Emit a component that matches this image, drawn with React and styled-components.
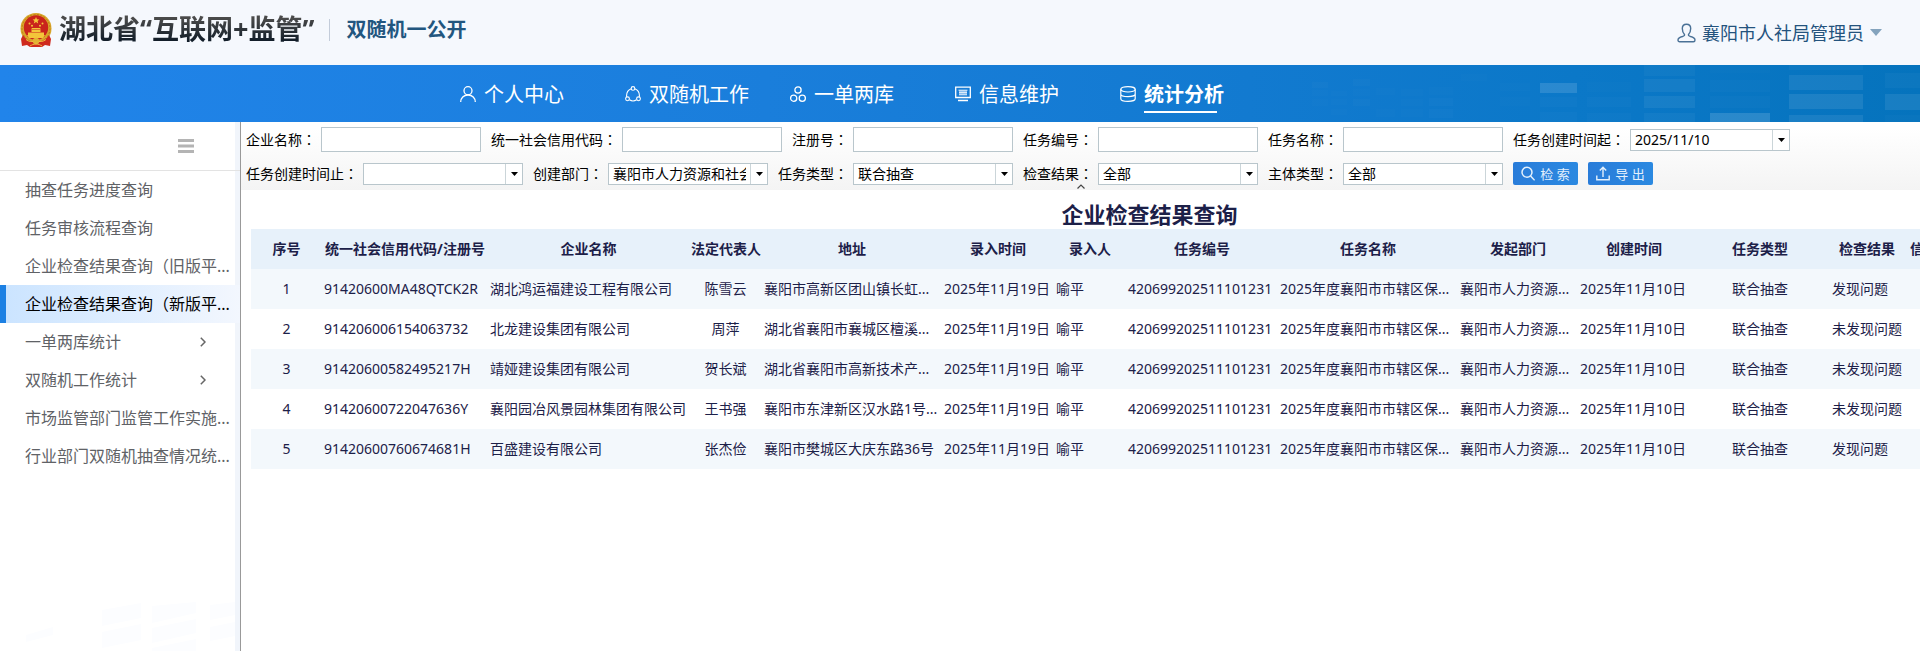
import React from "react";
import styled, { createGlobalStyle, css } from "styled-components";

const sans = `"Noto Sans", "Noto Sans CJK SC", sans-serif`;

const GlobalStyle = createGlobalStyle`
  * { box-sizing: border-box; }
  body { margin: 0; background: #fff; font: 14px/20px ${sans}; color: #000; overflow: hidden; }
  button, input, select { font: inherit; color: inherit; }
`;

const Page = styled.div`
  min-height: 100vh;
  display: flex;
  flex-direction: column;
`;

const Header = styled.header`
  height: 65px;
  padding: 0 38px 0 19px;
  display: flex;
  align-items: center;
  background: #f5f8fd;
`;

const Brand = styled.div`
  flex: 1;
  align-self: flex-start;
  display: flex;
  align-items: center;
  height: 60px;
`;

const BrandTitle = styled.h1`
  margin: 0 15px 2px 6px;
  font-size: 27px;
  line-height: 36px;
  font-weight: 700;
  background: linear-gradient(#4a4a4a 20%, #101c28 85%);
  background-clip: text;
  -webkit-background-clip: text;
  color: transparent;
`;

const BrandSub = styled.span`
  padding-left: 16px;
  border-left: 1px solid #c3ccda;
  font-size: 20px;
  line-height: 22px;
  font-weight: 700;
  color: #22567f;
`;

const UserMenu = styled.button`
  display: flex;
  align-items: center;
  gap: 6px;
  padding: 0;
  border: 0;
  background: none;
  color: #24537d;
  font-size: 18px;
  line-height: 24px;
`;

const Nav = styled.nav`
  height: 57px;
  display: grid;
  background: linear-gradient(90deg, #2184ea 0%, #1a7edb 40%, #127ad0 65%, #0b78c8 82%, #0573bd 100%);
`;

const NavList = styled.div`
  grid-area: 1 / 1;
  display: flex;
  padding-left: calc(50% - 500px);
`;

const NavDecor = styled.svg`
  grid-area: 1 / 1;
  justify-self: end;
`;

const NavLink = styled.a`
  width: 165px;
  display: flex;
  align-items: center;
  gap: 8px;
  padding-top: 1px;
  color: #fff;
  font-size: 20px;
  line-height: 28px;
  text-decoration: none;
  font-weight: ${(p) => (p.$active ? 700 : 400)};
  svg { flex: none; }
`;

const NavText = styled.span`
  padding: 6px 0 4px;
  ${(p) =>
    p.$active &&
    css`
      background: linear-gradient(#fff, #fff) left bottom / 73px 2px no-repeat;
    `}
`;

const Body = styled.div`
  flex: 1;
  display: flex;
`;

const Sidebar = styled.aside`
  flex: none;
  width: 241px;
  border-right: 1px solid #999;
  background: linear-gradient(90deg, #fff 235px, #f1f5fb 235px);
  display: flex;
  flex-direction: column;
`;

const SideHead = styled.div`
  height: 49px;
  padding: 0 46px 0 0;
  display: flex;
  align-items: center;
  justify-content: flex-end;
  border-bottom: 1px solid #e3e3e3;
`;

const IconButton = styled.button`
  display: flex;
  padding: 0;
  border: 0;
  background: none;
`;

const SideItem = styled.a`
  height: 38px;
  padding: 0 34px 0 19px;
  display: flex;
  align-items: center;
  justify-content: space-between;
  white-space: nowrap;
  font-size: 16px;
  line-height: 24px;
  text-decoration: none;
  color: ${(p) => (p.$active ? "#000" : "#606266")};
  border-left: 6px solid ${(p) => (p.$active ? "#1c80e3" : "transparent")};
  ${(p) =>
    p.$active &&
    css`
      background: linear-gradient(90deg, #cbe4ff, #f3f7fe);
    `}
`;

const SideDecor = styled.svg`
  margin-top: auto;
  flex: none;
`;

const Main = styled.main`
  flex: 1;
  min-width: 0;
  overflow: hidden;
`;

const Filters = styled.form`
  padding: 5px;
  height: 68px;
  display: flex;
  flex-direction: column;
  gap: 10px;
  background: linear-gradient(#fff 10%, #f4f4f4);
`;

const FilterRow = styled.div`
  display: flex;
  align-items: center;
  gap: 10px;
  white-space: nowrap;
`;

const Field = styled.label`
  display: flex;
  align-items: center;
  gap: 5px;
`;

const Colon = styled.span`
  font-family: "Noto Sans CJK TC", sans-serif;
`;

const TextInput = styled.input`
  width: 160px;
  height: 25px;
  padding: 0 4px;
  border: 1px solid #b9c6cc;
  border-radius: 0;
  background: #fff;
  outline: none;
`;

const Combo = styled.span`
  width: 160px;
  height: 22px;
  display: grid;
  border: 1px solid #b9c6cc;
  background: #fff;
`;

const comboControl = css`
  grid-area: 1 / 1;
  width: 100%;
  height: 20px;
  min-width: 0;
  padding: 0 21px 0 4px;
  border: 0;
  border-radius: 0;
  background: none;
  appearance: none;
  outline: none;
  line-height: 20px;
`;

const ComboInput = styled.input`
  ${comboControl}
`;

const ComboSelect = styled.select`
  ${comboControl}
`;

const ComboArrow = styled.span`
  grid-area: 1 / 1;
  justify-self: end;
  width: 17px;
  display: flex;
  align-items: center;
  justify-content: center;
  border-left: 1px solid #cbd5d9;
  pointer-events: none;
`;

const ActionButton = styled.button`
  width: 65px;
  height: 23px;
  padding: 0;
  display: flex;
  align-items: center;
  justify-content: center;
  gap: 5px;
  border: 0;
  border-radius: 2px;
  background: linear-gradient(90deg, #297cd9, #2b89e1);
  color: #e3f0fc;
  font-size: 13px;
  line-height: 20px;
`;

const CollapseButton = styled(IconButton)`
  position: absolute;
  left: 50%;
  bottom: 1px;
  margin-left: -4px;
`;

const FilterPanel = styled.section`
  position: relative;
`;

const Table = styled.table`
  width: 1797px;
  margin-left: 10px;
  table-layout: fixed;
  border-collapse: collapse;
  color: #1c2048;
  white-space: nowrap;
`;

const Caption = styled.caption`
  padding: 9px 0 0;
  font-size: 22px;
  line-height: 30px;
  font-weight: 700;
  color: #1c2048;
`;

const HeadCell = styled.th`
  height: 40px;
  padding: ${(p) => (p.$edge ? "0 6px" : "0 2px")};
  background: #e7f1fa;
  font-weight: 700;
  text-align: ${(p) => (p.$edge ? "left" : "center")};
`;

const Row = styled.tr`
  background: ${(p) => (p.$striped ? "#f3f8fc" : "#fff")};
`;

const Cell = styled.td`
  height: 40px;
  padding: 0 2px;
  text-align: ${(p) => (p.$center ? "center" : "left")};
`;

/* ---------- drawings ---------- */

const Emblem = () => (
  <svg width="34" height="36" viewBox="0 0 34 36" aria-hidden="true">
    <circle cx="17" cy="16.500" r="15.500" fill="#d9a62a" />
    <circle cx="17" cy="16.500" r="14" fill="none" stroke="#b97f18" strokeWidth="1" strokeDasharray="2 1.500" />
    <path d="M4 23c3 5 8 7 13 7s10-2 13-7l2 4-1 7-5-1-3 2H11l-3-2-5 1-1-7z" fill="#cf2a1e" />
    <circle cx="17" cy="15.500" r="12.200" fill="#c9241c" />
    <path d="M17 5l1 2.200 2.400.2-1.800 1.600.6 2.400-2.200-1.300-2.200 1.300.6-2.400-1.800-1.600 2.400-.2z" fill="#f3c53a" />
    <g fill="#f3c53a">
      <circle cx="10.500" cy="11.500" r="1" />
      <circle cx="13" cy="13.800" r="1" />
      <circle cx="21" cy="13.800" r="1" />
      <circle cx="23.500" cy="11.500" r="1" />
      <path d="M12 17.500l1-1.500h8l1 1.500zM12.500 18h9v2h-9zM9 20.500h16V23H9zM8 23h18l-2 3H10z" />
    </g>
    <circle cx="17" cy="29" r="3.200" fill="#e3b234" />
    <path d="M7 27.500c3 2.500 6 2 7 2M27 27.500c-3 2.500-6 2-7 2M11 34c2-1 3-2 6-2s4 1 6 2" stroke="#f0c040" fill="none" />
  </svg>
);

const BustIcon = () => (
  <svg width="19" height="20" viewBox="0 0 19 20" fill="none" stroke="#4a7196" strokeWidth="1.400" aria-hidden="true">
    <path d="M7.500 11.500C5.800 9.800 5.300 7.500 5.300 5.600 5.300 2.900 7 1.200 9.500 1.200s4.200 1.700 4.200 4.400c0 1.900-.5 4.200-2.200 5.900-.3 1.200.6 1.600 2 2 3 .7 4.500 1.500 4.500 3.500 0 1.200-.6 1.800-1.700 1.800H2.700C1.600 18.800 1 18.200 1 17c0-2 1.500-2.800 4.500-3.500 1.400-.4 2.300-.8 2-2z" />
  </svg>
);

const icon = { width: 16, height: 16, viewBox: "0 0 16 16", fill: "none", stroke: "#fff", strokeWidth: 1.3, "aria-hidden": true };

const PersonIcon = () => (
  <svg {...icon}>
    <circle cx="8" cy="4.700" r="4" />
    <path d="M.7 16c0-4.200 3-7 7.300-7s7.300 2.800 7.300 7" />
  </svg>
);

const LinkedIcon = () => (
  <svg {...icon} strokeWidth="1.100">
    <circle cx="8" cy="2.400" r="1.800" />
    <circle cx="2.500" cy="12.800" r="1.900" />
    <circle cx="13.500" cy="12.800" r="1.900" />
    <path d="M6.200 2.800C3 4 1.300 7 1.600 10.900M9.800 2.800c3.200 1.200 4.900 4.200 4.600 8.100M4.400 13.800c2.200 1.500 5 1.500 7.200 0" />
  </svg>
);

const TrioIcon = () => (
  <svg {...icon}>
    <circle cx="8" cy="4" r="3.100" />
    <circle cx="3.700" cy="12.200" r="3.100" />
    <circle cx="12.300" cy="12.200" r="3.100" />
  </svg>
);

const ScreenIcon = () => (
  <svg {...icon}>
    <path d="M.7 1.200h14.600v10.300H.7zM3 14.500h10" />
    <path d="M4 4h8v5H4z" fill="#8fc0ee" stroke="none" />
    <path d="M3.500 4.200h9M4 6.500h8M4 8.800h8" stroke="#dcebfa" strokeWidth="1" />
  </svg>
);

const StackIcon = () => (
  <svg {...icon} strokeWidth="1.200">
    <ellipse cx="8" cy="3.300" rx="7.200" ry="2.700" />
    <path d="M.8 3.300v9.400c0 1.500 3.200 2.700 7.200 2.700s7.200-1.200 7.200-2.700V3.300M.8 7.900c0 1.500 3.200 2.700 7.200 2.700s7.200-1.200 7.200-2.700" />
  </svg>
);

const Triangle = ({ w, h, fill }) => (
  <svg width={w} height={h} viewBox={`0 0 ${w} ${h}`} aria-hidden="true">
    <path d={`M0 0h${w}L${w / 2} ${h}z`} fill={fill} />
  </svg>
);

const MenuIcon = () => (
  <svg width="16" height="14" viewBox="0 0 16 14" aria-hidden="true">
    <path d="M0 0h16v3H0zM0 5.500h16v3H0zM0 11h16v3H0z" fill="#b4b4b4" />
  </svg>
);

const Chevron = () => (
  <svg width="6" height="10" viewBox="0 0 6 10" fill="none" stroke="#666" strokeWidth="1.500" aria-hidden="true">
    <path d="M.8.8L5 5 .8 9.200" />
  </svg>
);

const SearchIcon = () => (
  <svg width="14" height="15" viewBox="0 0 14 15" fill="none" stroke="#e3f0fc" strokeWidth="1.500" aria-hidden="true">
    <circle cx="6" cy="6.200" r="5" />
    <path d="M9.600 10l4 4.300" />
  </svg>
);

const ExportIcon = () => (
  <svg width="14" height="15" viewBox="0 0 14 15" fill="none" stroke="#e3f0fc" strokeWidth="1.400" aria-hidden="true">
    <path d="M7 11V1.500M3.800 4.600L7 1.200l3.200 3.400M.8 9.500v4.200h12.400V9.500" />
  </svg>
);

/* faint window tiles: x, y, width, height, opacity */
const tiles = [
  [230, 18, 37, 10, 0.13], [230, 32, 37, 10, 0.02], [230, 47, 37, 10, 0.02],
  [277, 17, 44, 10, 0.01], [277, 32, 44, 10, 0.02], [277, 48, 44, 9, 0.02],
  [334, 0, 51, 11, 0.03], [334, 14, 51, 13, 0.05], [334, 31, 51, 12, 0.06], [334, 48, 51, 9, 0.04],
  [400, 0, 60, 8, 0.01], [400, 15, 60, 12, 0.02], [400, 31, 60, 12, 0.02], [400, 48, 60, 9, 0.14],
  [479, 0, 74, 5, 0.03], [479, 10, 74, 15, 0.07], [479, 29, 74, 15, 0.09], [479, 50, 74, 7, 0.08],
  [575, 8, 35, 15, 0.03], [575, 29, 35, 16, 0.08], [575, 50, 35, 7, 0.02],
  [2, 17, 16, 6, 0.02], [2, 25, 16, 6, 0.01], [2, 34, 16, 7, 0.01],
  [21, 26, 16, 5, 0.01], [21, 34, 16, 6, 0.01], [21, 44, 16, 6, 0.01],
  [43, 14, 17, 7, 0.02], [43, 24, 17, 7, 0.01], [43, 34, 17, 7, 0.02],
  [66, 23, 19, 7, 0.01], [66, 44, 19, 8, 0.01],
  [91, 24, 22, 7, 0.01], [91, 34, 22, 7, 0.01], [91, 44, 22, 8, 0.01],
  [119, 22, 24, 8, 0.01], [119, 33, 24, 8, 0.02], [119, 44, 24, 9, 0.02],
  [151, 9, 26, 7, 0.01], [190, 18, 30, 8, 0.01], [190, 32, 30, 9, 0.01],
];

/* ---------- data ---------- */

const navItems = [
  ["个人中心", PersonIcon],
  ["双随机工作", LinkedIcon],
  ["一单两库", TrioIcon],
  ["信息维护", ScreenIcon],
  ["统计分析", StackIcon, true],
];

const sideItems = [
  { text: "抽查任务进度查询" },
  { text: "任务审核流程查询" },
  { text: "企业检查结果查询（旧版平..." },
  { text: "企业检查结果查询（新版平...", active: true },
  { text: "一单两库统计", more: true },
  { text: "双随机工作统计", more: true },
  { text: "市场监管部门监管工作实施..." },
  { text: "行业部门双随机抽查情况统..." },
];

const columns = [
  ["序号", 71], ["统一社会信用代码/注册号", 166], ["企业名称", 201], ["法定代表人", 73],
  ["地址", 180], ["录入时间", 112], ["录入人", 72], ["任务编号", 152], ["任务名称", 180],
  ["发起部门", 120], ["创建时间", 112], ["任务类型", 140], ["检查结果", 74], ["信", 144],
];
const centered = [0, 3, 11];

const companies = [
  ["91420600MA48QTCK2R", "湖北鸿运福建设工程有限公司", "陈雪云", "襄阳市高新区团山镇长虹...", "发现问题"],
  ["914206006154063732", "北龙建设集团有限公司", "周萍", "湖北省襄阳市襄城区檀溪...", "未发现问题"],
  ["91420600582495217H", "靖娅建设集团有限公司", "贺长斌", "湖北省襄阳市高新技术产...", "未发现问题"],
  ["91420600722047636Y", "襄阳园冶风景园林集团有限公司", "王书强", "襄阳市东津新区汉水路1号...", "未发现问题"],
  ["91420600760674681H", "百盛建设有限公司", "张杰俭", "襄阳市樊城区大庆东路36号", "发现问题"],
];
const rows = companies.map(([code, name, person, address, result], i) => [
  i + 1, code, name, person, address, "2025年11月19日", "喻平", "420699202511101231",
  "2025年度襄阳市市辖区保...", "襄阳市人力资源...", "2025年11月10日", "联合抽查", result, "",
]);

const Labelled = ({ label, children }) => (
  <Field>
    <span>{label}<Colon>：</Colon></span>
    {children}
  </Field>
);

const TextField = ({ label }) => (
  <Labelled label={label}>
    <TextInput type="text" />
  </Labelled>
);

const ComboField = ({ label, value, date }) => (
  <Labelled label={label}>
    <Combo>
      {date ? (
        <ComboInput type="text" defaultValue={value} />
      ) : (
        <ComboSelect defaultValue={value}>
          <option>{value}</option>
        </ComboSelect>
      )}
      <ComboArrow><Triangle w={7} h={4} fill="#000" /></ComboArrow>
    </Combo>
  </Labelled>
);

export default function App() {
  return (
    <Page>
      <GlobalStyle />
      <Header>
        <Brand>
          <Emblem />
          <BrandTitle>湖北省“互联网+监管”</BrandTitle>
          <BrandSub>双随机一公开</BrandSub>
        </Brand>
        <UserMenu type="button">
          <BustIcon />
          襄阳市人社局管理员
          <Triangle w={12} h={7} fill="#84a3bd" />
        </UserMenu>
      </Header>
      <Nav>
        <NavDecor width="610" height="57" viewBox="0 0 610 57" aria-hidden="true">
          {tiles.map(([x, y, w, h, o]) => (
            <rect key={`${x}-${y}`} x={x} y={y} width={w} height={h} fill="#fff" opacity={o} />
          ))}
        </NavDecor>
        <NavList>
          {navItems.map(([text, Icon, active]) => (
            <NavLink key={text} href="#" $active={active}>
              <Icon />
              <NavText $active={active}>{text}</NavText>
            </NavLink>
          ))}
        </NavList>
      </Nav>
      <Body>
        <Sidebar>
          <SideHead>
            <IconButton type="button" aria-label="菜单"><MenuIcon /></IconButton>
          </SideHead>
          {sideItems.map(({ text, active, more }) => (
            <SideItem key={text} href="#" $active={active}>
              {text}
              {more && <Chevron />}
            </SideItem>
          ))}
          <SideDecor width="235" height="50" viewBox="0 0 235 50" fill="#fcfdff" aria-hidden="true">
            <path d="M102 9l39-7v15l-39 8zM102 31l39-8v16l-39 8zM152 5l44-4v11l-44 10zM152 27l44-9v14l-44 10zM152 47l44-9v12h-44zM26 34l27-8v8l-27 7zM210 4l25-3v13l-25 5zM210 26l25-5v14l-25 5z" />
          </SideDecor>
        </Sidebar>
        <Main>
          <FilterPanel>
            <Filters>
              <FilterRow>
                <TextField label="企业名称" />
                <TextField label="统一社会信用代码" />
                <TextField label="注册号" />
                <TextField label="任务编号" />
                <TextField label="任务名称" />
                <ComboField label="任务创建时间起" value="2025/11/10" date />
              </FilterRow>
              <FilterRow>
                <ComboField label="任务创建时间止" value="" date />
                <ComboField label="创建部门" value="襄阳市人力资源和社会保障局" />
                <ComboField label="任务类型" value="联合抽查" />
                <ComboField label="检查结果" value="全部" />
                <ComboField label="主体类型" value="全部" />
                <ActionButton type="button"><SearchIcon />检 索</ActionButton>
                <ActionButton type="button"><ExportIcon />导 出</ActionButton>
              </FilterRow>
            </Filters>
            <CollapseButton type="button" aria-label="收起">
              <svg width="8" height="5" viewBox="0 0 8 5" fill="none" stroke="#444" strokeWidth="1.200">
                <path d="M.5 4.500L4 1l3.500 3.500" />
              </svg>
            </CollapseButton>
          </FilterPanel>
          <Table>
            <Caption>企业检查结果查询</Caption>
            <colgroup>
              {columns.map(([name, width]) => <col key={name} width={width} />)}
            </colgroup>
            <thead>
              <tr>
                {columns.map(([name], i) => (
                  <HeadCell key={name} scope="col" $edge={i === columns.length - 1}>{name}</HeadCell>
                ))}
              </tr>
            </thead>
            <tbody>
              {rows.map((row, r) => (
                <Row key={row[1]} $striped={r % 2 === 0}>
                  {row.map((value, c) => (
                    <Cell key={c} $center={centered.includes(c)}>{value}</Cell>
                  ))}
                </Row>
              ))}
            </tbody>
          </Table>
        </Main>
      </Body>
    </Page>
  );
}
